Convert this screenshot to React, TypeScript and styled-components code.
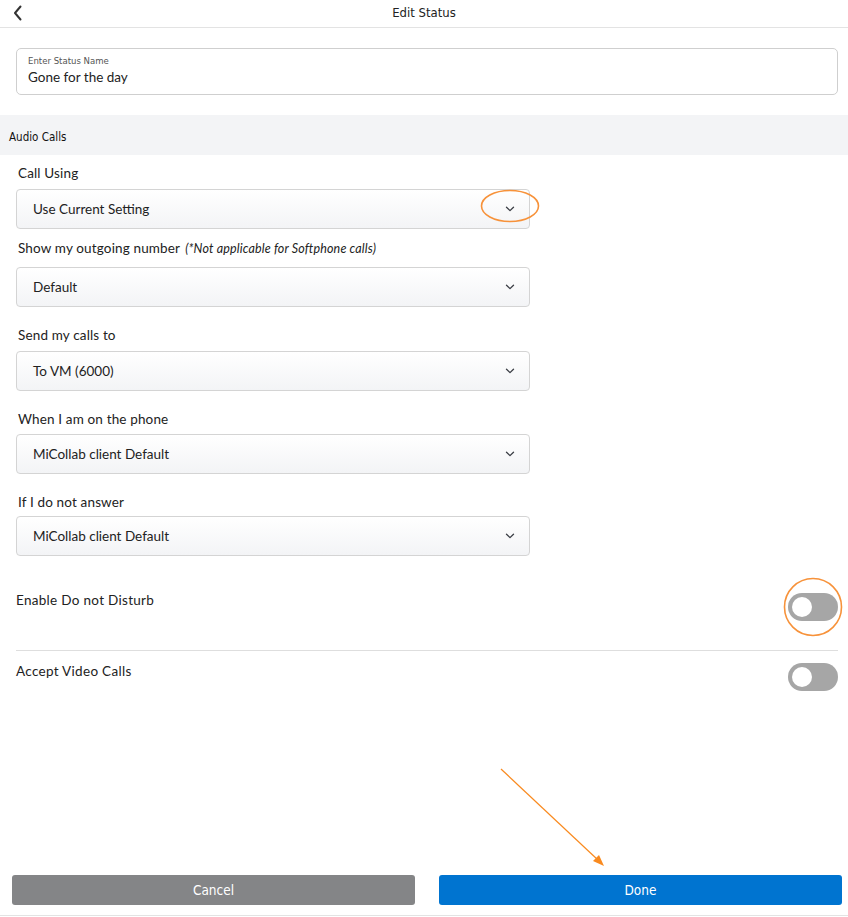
import React from 'react';
import styled, { createGlobalStyle } from 'styled-components';

const GlobalStyle = createGlobalStyle`
  html, body {
    margin: 0;
    padding: 0;
    background: #ffffff;
  }
  * {
    box-sizing: border-box;
  }
`;

const narrow = `'DejaVu Sans Condensed', 'Liberation Sans Narrow', 'Roboto Condensed', sans-serif`;
const body = `Lato, 'Open Sans', sans-serif`;

const Page = styled.div`
  position: relative;
  height: 917px;
  display: flex;
  flex-direction: column;
  font-family: ${body};
  color: #222;
`;

const Header = styled.div`
  height: 28px;
  border-bottom: 1px solid #e3e3e3;
  display: flex;
  align-items: center;
  justify-content: center;
  position: relative;
`;

const BackButton = styled.div`
  position: absolute;
  left: 12px;
  top: 4px;
  width: 16px;
  height: 18px;
  display: flex;
  align-items: center;
`;

const Title = styled.div`
  font-family: ${narrow};
  font-size: 13px;
  color: #222;
  margin-top: -3px;
`;

const Content = styled.div`
  flex: 1;
  display: flex;
  flex-direction: column;
`;

const NameBox = styled.div`
  margin: 20px 10px 20px 16px;
  height: 47px;
  border: 1px solid #cfcfcf;
  border-radius: 5px;
  padding: 6px 11px;
  display: flex;
  flex-direction: column;
`;

const NameLabel = styled.div`
  font-family: ${narrow};
  font-size: 9.5px;
  color: #555;
  line-height: 12px;
`;

const NameValue = styled.div`
  font-size: 13.5px;
  line-height: 18px;
  margin-top: 1px;
  color: #222;
`;

const SectionHeader = styled.div`
  height: 40px;
  background: #f3f4f6;
  display: flex;
  align-items: center;
  padding: 4px 0 0 9px;
  font-family: ${narrow};
  font-size: 11.5px;
  color: #111;
`;

const Fields = styled.div`
  padding: 0 318px 0 16px;
  display: flex;
  flex-direction: column;
`;

const FieldLabel = styled.div<{ $top: number; $gap: number }>`
  margin-top: ${(p) => p.$top}px;
  margin-bottom: ${(p) => p.$gap}px;
  padding-left: 2px;
  font-size: 13.5px;
  line-height: 17px;
  color: #222;
  letter-spacing: 0.15px;
`;

const Note = styled.span`
  font-size: 12.5px;
  font-style: italic;
  margin-left: 5px;
`;

const SelectBox = styled.div`
  height: 40px;
  border: 1px solid #d4d4d4;
  border-radius: 4px;
  background: linear-gradient(#ffffff, #f3f4f6);
  display: flex;
  align-items: center;
  justify-content: space-between;
  padding: 0 14px 0 16px;
  font-size: 13.5px;
  color: #222;
`;

const ToggleRow = styled.div<{ $divider?: boolean }>`
  margin: 0 10px 0 16px;
  display: flex;
  justify-content: space-between;
  align-items: flex-start;
  border-top: ${(p) => (p.$divider ? '1px solid #dedede' : 'none')};
`;

const ToggleText = styled.div<{ $top: number }>`
  padding-top: ${(p) => p.$top}px;
  font-size: 13.5px;
  line-height: 17px;
  letter-spacing: 0.3px;
`;

const Toggle = styled.div<{ $top: number }>`
  margin-top: ${(p) => p.$top}px;
  width: 50px;
  height: 28px;
  border-radius: 14px;
  background: #a6a6a6;
  padding: 4px;
  display: flex;
`;

const Knob = styled.div`
  width: 20px;
  height: 20px;
  border-radius: 50%;
  background: #ffffff;
`;

const Footer = styled.div`
  display: grid;
  grid-template-columns: 1fr 1fr;
  gap: 24px;
  padding: 0 6px 10px 12px;
  border-bottom: 1px solid #e3e3e3;
  margin-bottom: 1px;
`;

const ActionButton = styled.div<{ $primary?: boolean }>`
  height: 30px;
  border-radius: 3px;
  background: ${(p) => (p.$primary ? '#0074d0' : '#848587')};
  color: #fff;
  font-family: ${narrow};
  font-size: 13.5px;
  display: flex;
  align-items: center;
  justify-content: center;
`;

const Overlay = styled.svg`
  position: absolute;
  left: 0;
  top: 0;
  pointer-events: none;
`;

const Chevron = () => (
  <svg width="10" height="6" viewBox="0 0 10 6">
    <path d="M1.5 1.2 L5 4.6 L8.5 1.2" fill="none" stroke="#3a3d44" strokeWidth="1.3" strokeLinecap="round" strokeLinejoin="round" />
  </svg>
);

const Select = ({ value }: { value: string }) => (
  <SelectBox>
    <span>{value}</span>
    <Chevron />
  </SelectBox>
);

const fields = [
  { label: 'Call Using', value: 'Use Current Setting', top: 10, gap: 7 },
  { label: 'Show my outgoing number', note: '(*Not applicable for Softphone calls)', value: 'Default', top: 11, gap: 10 },
  { label: 'Send my calls to', value: 'To VM (6000)', top: 20, gap: 7 },
  { label: 'When I am on the phone', value: 'MiCollab client Default', top: 20, gap: 6 },
  { label: 'If I do not answer', value: 'MiCollab client Default', top: 20, gap: 5 },
];

export default function App() {
  return (
    <Page>
      <GlobalStyle />
      <Header>
        <BackButton>
          <svg width="12" height="16" viewBox="0 0 12 16">
            <path d="M8.5 1.5 L3 8 L8.5 14.5" fill="none" stroke="#333" strokeWidth="2" strokeLinecap="round" strokeLinejoin="round" />
          </svg>
        </BackButton>
        <Title>Edit Status</Title>
      </Header>
      <Content>
        <NameBox>
          <NameLabel>Enter Status Name</NameLabel>
          <NameValue>Gone for the day</NameValue>
        </NameBox>
        <SectionHeader>Audio Calls</SectionHeader>
        <Fields>
          {fields.map((f) => (
            <React.Fragment key={f.label}>
              <FieldLabel $top={f.top} $gap={f.gap}>
                {f.label}
                {f.note && <Note>{f.note}</Note>}
              </FieldLabel>
              <Select value={f.value} />
            </React.Fragment>
          ))}
        </Fields>
        <ToggleRow style={{ marginTop: 36, height: 58 }}>
          <ToggleText $top={0}>Enable Do not Disturb</ToggleText>
          <Toggle $top={1}>
            <Knob />
          </Toggle>
        </ToggleRow>
        <ToggleRow $divider>
          <ToggleText $top={12}>Accept Video Calls</ToggleText>
          <Toggle $top={12}>
            <Knob />
          </Toggle>
        </ToggleRow>
      </Content>
      <Footer>
        <ActionButton>Cancel</ActionButton>
        <ActionButton $primary>Done</ActionButton>
      </Footer>
      <Overlay width="848" height="917" viewBox="0 0 848 917">
        <ellipse cx="510" cy="206" rx="28.5" ry="15.5" fill="none" stroke="#f7923a" strokeWidth="1.6" />
        <circle cx="813" cy="607" r="28.5" fill="none" stroke="#f7923a" strokeWidth="1.6" />
        <line x1="501" y1="769" x2="598" y2="860" stroke="#f98a1f" strokeWidth="1.2" />
        <path d="M604 866 L593 861 L599 855 Z" fill="#f98a1f" />
      </Overlay>
    </Page>
  );
}
